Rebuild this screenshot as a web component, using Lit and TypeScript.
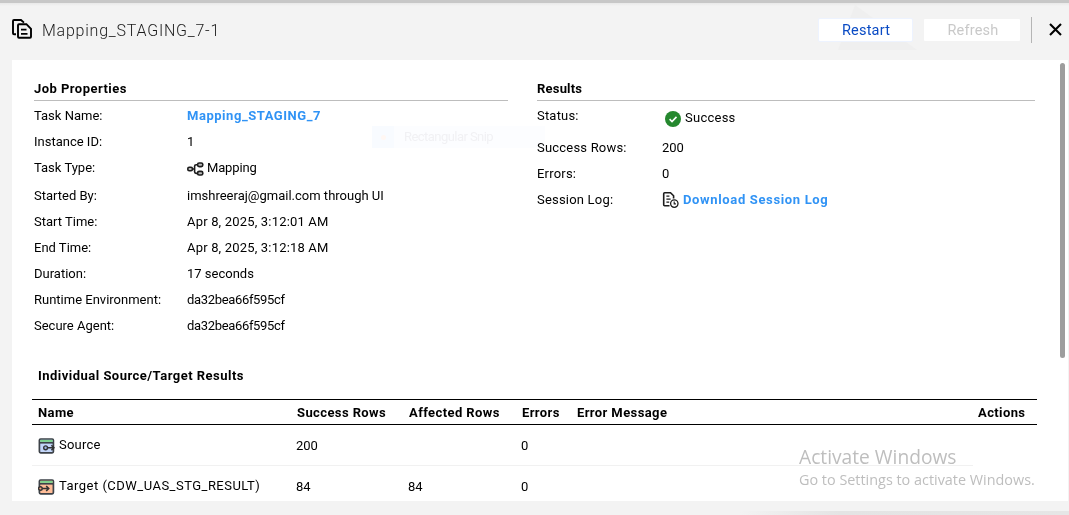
import { LitElement, html, css, svg } from "lit";
import { customElement } from "lit/decorators.js";

const copyIcon = html`<svg class="copy" viewBox="0 0 22 22" width="22" height="22" fill="none" stroke="#000" stroke-width="1.9">
  <path d="M5 16.2H3Q2 16.2 2 15.2V3Q2 2 3 2H10l3 2.6"/><path d="M7 7.2Q7 6.2 8 6.2H15.4L20 10.8V18.8Q20 19.8 19 19.8H8Q7 19.8 7 18.8z"/><path d="M10 11.6h5.5M10 15.8h6.5" stroke-width="1.7"/></svg>`;
const mappingIcon = html`<svg class="ico" viewBox="0 0 18 16" width="18" height="16" fill="#bbb" stroke="#1c1c1c" stroke-width="1.6">
  <path d="M5 8h2.5M12 3.7H9.2Q7.6 3.7 7.6 5.3V10.8Q7.6 12.4 9.2 12.4H12" fill="none"/>
  <rect x=".8" y="6.3" width="4.6" height="3.4" rx="1.4"/><rect x="10.6" y="2" width="5.2" height="3.6" rx="1.6"/><rect x="10.6" y="10.4" width="5.2" height="3.6" rx="1.6"/></svg>`;
const successIcon = html`<svg class="ico" viewBox="0 0 16 16" width="16" height="16"><circle cx="8" cy="8" r="8" fill="#25882e"/>
  <path d="M4.6 8.2l2.4 2.3 4.5-4.6" fill="none" stroke="#fff" stroke-width="1.6"/></svg>`;
const logIcon = html`<svg class="ico" viewBox="0 0 18 18" width="18" height="18" fill="none" stroke="#1c1c1c" stroke-width="1.6">
  <path d="M7.5 14.8H2.7Q1.7 14.8 1.7 13.8V2.7Q1.7 1.7 2.7 1.7H8.5L11.6 4.8V7.5"/><path d="M4.4 5.2h3M4.4 8.2h4.2M4.4 11.2h2.8" stroke-width="1.3"/>
  <circle cx="12.3" cy="12.6" r="3.7" fill="#fff" stroke-width="1.3"/><path d="M12.2 10.6v2.3h1.7" stroke-width="1.1"/></svg>`;
const endpointIcon = (fill: string, target: boolean) => html`<svg class="ico" viewBox="0 0 17 16" width="17" height="16">
  <rect x="1.4" y="1" width="14" height="13.8" rx="1.2" fill=${fill} stroke="#3d4248" stroke-width="1.7"/>
  <path d="M2.2 1.9h12.4v2H2.2z" fill="#7bd38c"/><path d="M1.4 4.8h14" stroke="#3d4248" stroke-width="1.6"/>
  ${target
    ? svg`<path d="M4 9.5h6.6M8.2 7l2.5 2.5-2.5 2.5" stroke="#333" stroke-width="1.6" fill="none"/><circle cx="2.4" cy="9.5" r="1.8" fill="#f5a77f" stroke="#333" stroke-width="1.4"/>`
    : svg`<path d="M8.5 9.8h7.4M13.4 7.3l2.5 2.5-2.5 2.5" stroke="#333" stroke-width="1.6" fill="none"/><circle cx="7.6" cy="9.8" r="1.9" fill="#9ab5e6" stroke="#333" stroke-width="1.4"/>`}
</svg>`;

@customElement("app-root")
export class AppRoot extends LitElement {
  static styles = css`
    :host { display: block; width: 1069px; height: 515px; overflow: hidden; position: relative; background: #f3f3f3;
      font: 13px/26px Roboto, "Liberation Sans", sans-serif; color: #000; }
    * { box-sizing: border-box; }
    svg { display: block; flex: none; }
    .page { display: flex; flex-direction: column; height: 515px; border-top: 3px solid #c7c7c7; }
    header { height: 57px; display: flex; align-items: center; padding: 0 7px 3px 11px; flex: none;
      background: linear-gradient(#e8e8e8, #f3f3f3 3px); }
    .copy { margin-top: -3px; }
    .title { font-size: 16px; margin-left: 9px; flex: 1; letter-spacing: .77px; font-weight: 300; padding-top: 2px; color: #1c1c1c; }
    button { height: 22px; border: 0; padding: 0; background: #fff; font: 14.5px/24px Roboto, sans-serif; letter-spacing: .2px; border-radius: 1px; }
    .restart { width: 93px; color: #0a4bc4; box-shadow: 0 0 0 1px #edf3ff; position: relative; padding-left: 1px; }
    .refresh { width: 96px; margin-left: 12px; color: #c9c9c9; position: relative; padding-left: 2px; }
    .sep { width: 1px; height: 26px; background: #b5b5b5; margin: 0 17px 0 11px; }
    .close { margin-top: -2px; }
    .panel { margin: 0 1px 0 12px; height: 441px; background: #fff; overflow: hidden; padding: 15px 32px 0 20px; flex: none; position: relative; }
    .cols { display: flex; padding-left: 2px; gap: 29px; height: 286px; }
    .job { width: 474px; } .results { width: 498px; }
    h2 { margin: 0 0 2px; height: 26px; line-height: 28px; font-size: 13px; font-weight: 700; border-bottom: 1px solid #bdbdbd; letter-spacing: .46px; }
    .results h2 { letter-spacing: .2px; }
    .row { display: flex; height: 26px; }
    .row.type { height: 28px; line-height: 26px; }
    .row.type .value { height: 26px; }
    .type .ico { margin-top: 2px; }
    .row.status { height: 32px; }
    .label { width: 153px; flex: none; }
    .results .label { width: 125px; letter-spacing: .2px; }
    .value { display: flex; align-items: center; }
    .date .value { letter-spacing: .18px; }
    .hash .value { letter-spacing: -.33px; }
    .link { color: #3093f5; font-weight: 700; letter-spacing: .54px; }
    .results .link { letter-spacing: .65px; }
    .ico + span { margin-left: 3px; }
    .type .ico + span { margin-left: 2px; letter-spacing: -.15px; }
    .status .value { padding-left: 3px; height: 30px; letter-spacing: .25px; }
    .status .ico { margin-top: 1px; }
    .status .ico + span { margin-left: 4px; }
    h3 { margin: 0 0 10px; padding-left: 6px; height: 28px; font-size: 13px; line-height: 30px; letter-spacing: .48px; }
    .tr { display: grid; grid-template-columns: 259px 112px 113px 55px 1fr 59px; width: 1005px; padding-left: 6px; }
    .tr.head { height: 26px; line-height: 25px; border-top: 1px solid #000; border-bottom: 1px solid #000; font-weight: 700; letter-spacing: .4px; }
    .tr.body { height: 41px; align-items: center; }
    .tr.first { background: linear-gradient(#f1f1f1, #f1f1f1) left bottom / 941px 1px no-repeat; }
    .name { display: flex; align-items: center; letter-spacing: .2px; }
    .name .ico + span { margin: -2px 0 0 4px; }
    .name .ico + .wide { letter-spacing: .48px; }
    .num { margin: 0 0 0 -1px; }
    .thumb { position: absolute; left: 1060px; top: 63px; width: 5px; height: 295px; border-radius: 3px; background: #9d9d9d; }
    .ghost { position: absolute; left: 372px; top: 126px; width: 173px; height: 22px; display: flex; background: #fcfdff; color: #f1f1f4; line-height: 22px; mix-blend-mode: multiply; letter-spacing: -.55px; }
    .chip { width: 22px; height: 22px; background: #f8fbff; margin-right: 10px; display: grid; place-items: center; }
    .dot { width: 5px; height: 5px; border-radius: 50%; background: #fff7f3; }
    .mark { position: absolute; left: 799px; top: 444px; color: #bebebe; font: 14.4px/20px "Open Sans", sans-serif; white-space: nowrap; }
    .mark b { display: block; font-weight: 400; font-size: 19.2px; line-height: 26px; }
    .shade { position: absolute; left: 740px; top: 511px; width: 329px; height: 4px; background: linear-gradient(90deg, #f3f3f3, #e4e4e4 30%, #e6e6e6); }
    .tri { position: absolute; left: 838px; top: 5px; }
  `;
  private row(label: string, value: unknown, cls = "") {
    return html`<div class="row ${cls}"><span class="label">${label}</span><div class="value">${value}</div></div>`;
  }
  render() {
    return html`<div class="page">
      <header>
        <svg class="tri" width="80" height="45"><path d="M17 0L79 45H0z" fill="#efefef"/></svg>
        ${copyIcon}<span class="title">Mapping_STAGING_7-1</span>
        <button class="restart">Restart</button><button class="refresh">Refresh</button>
        <div class="sep"></div>
        <svg class="close" width="13" height="13" viewBox="0 0 13 13"><path d="M1 1l11 11M12 1L1 12" stroke="#000" stroke-width="2.1"/></svg>
      </header>
      <main class="panel">
        <div class="cols">
          <section class="job"><h2>Job Properties</h2>
            ${this.row("Task Name:", html`<span class="link">Mapping_STAGING_7</span>`)}
            ${this.row("Instance ID:", "1")}
            ${this.row("Task Type:", html`${mappingIcon}<span>Mapping</span>`, "type")}
            ${this.row("Started By:", "imshreeraj@gmail.com through UI")}
            ${this.row("Start Time:", "Apr 8, 2025, 3:12:01 AM", "date")}
            ${this.row("End Time:", "Apr 8, 2025, 3:12:18 AM", "date")}
            ${this.row("Duration:", "17 seconds")}
            ${this.row("Runtime Environment:", "da32bea66f595cf", "hash")}
            ${this.row("Secure Agent:", "da32bea66f595cf", "hash")}
          </section>
          <section class="results"><h2>Results</h2>
            ${this.row("Status:", html`${successIcon}<span>Success</span>`, "status")}
            ${this.row("Success Rows:", "200")}
            ${this.row("Errors:", "0")}
            ${this.row("Session Log:", html`${logIcon}<span class="link">Download Session Log</span>`)}
          </section>
        </div>
        <h3>Individual Source/Target Results</h3>
        <div class="tr head"><span>Name</span><span>Success Rows</span><span>Affected Rows</span><span>Errors</span><span>Error Message</span><span>Actions</span></div>
        <div class="tr body first"><span class="name">${endpointIcon("#c3d6fa", false)}<span>Source</span></span><span class="num">200</span><span></span><span class="num">0</span></div>
        <div class="tr body"><span class="name">${endpointIcon("#ffbd98", true)}<span class="wide">Target (CDW_UAS_STG_RESULT)</span></span><span class="num">84</span><span class="num">84</span><span class="num">0</span></div>
      </main>
    </div>
    <div class="thumb"></div>
    <div class="ghost"><span class="chip"><span class="dot"></span></span>Rectangular Snip</div>
    <div class="mark"><b>Activate Windows</b>Go to Settings to activate Windows.</div>
    <div class="shade"></div>`;
  }
}
